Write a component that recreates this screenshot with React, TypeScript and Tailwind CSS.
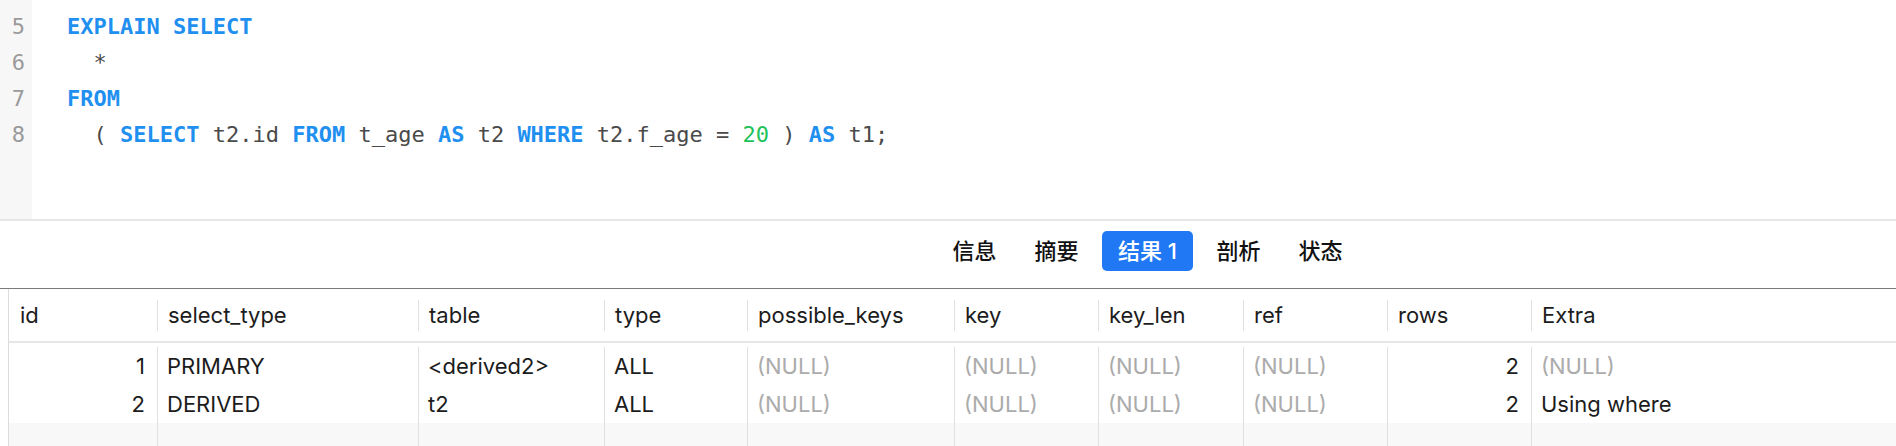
import React from "react";

const KW = "font-bold text-[#1f8ff0]";
const ID = "text-[#4a4a4a]";

function Code() {
  const lines: React.ReactNode[] = [
    <>
      <span className={KW}>EXPLAIN SELECT</span>
    </>,
    <>
      <span className={ID}>{"  *"}</span>
    </>,
    <>
      <span className={KW}>FROM</span>
    </>,
    <>
      <span className={ID}>{"  ( "}</span>
      <span className={KW}>SELECT</span>
      <span className={ID}> t2.id </span>
      <span className={KW}>FROM</span>
      <span className={ID}> t_age </span>
      <span className={KW}>AS</span>
      <span className={ID}> t2 </span>
      <span className={KW}>WHERE</span>
      <span className={ID}> t2.f_age = </span>
      <span className="text-[#1ec25a]">20</span>
      <span className={ID}> ) </span>
      <span className={KW}>AS</span>
      <span className={ID}> t1;</span>
    </>,
  ];
  return (
    <div className="flex h-[219px] bg-white">
      <div className="w-[32px] bg-[#f7f7f7] pt-[9px] pr-[7px] text-right font-['DejaVu_Sans_Mono',monospace] text-[22px] leading-[36px] text-[#9a9a9a]">
        {[5, 6, 7, 8].map((n) => (
          <div key={n}>{n}</div>
        ))}
      </div>
      <div className="pl-[35px] pt-[9px] font-['DejaVu_Sans_Mono',monospace] text-[22px] leading-[36px] whitespace-pre">
        {lines.map((l, i) => (
          <div key={i}>{l}</div>
        ))}
      </div>
    </div>
  );
}

function Tabs() {
  const tabs = [
    { t: "信息", w: "w-[73px]" },
    { t: "摘要", w: "w-[73px]" },
    { t: "结果 1", w: "w-[91px]", active: true },
    { t: "剖析", w: "w-[73px]" },
    { t: "状态", w: "w-[73px]" },
  ];
  return (
    <div className="flex h-[68px] items-start gap-[9px] border-b border-[#7b7b7b] bg-white pl-[938px] pt-[10px] font-['Inter','Noto_Sans_CJK_SC',sans-serif] text-[22px] font-medium">
      {tabs.map((t) => (
        <div
          key={t.t}
          className={
            t.w +
            " flex h-[40px] items-center justify-center rounded-[5px] " +
            (t.active ? "bg-[#2178f5] text-white" : "text-[#111]")
          }
        >
          {t.t}
        </div>
      ))}
    </div>
  );
}

const cols = [
  { n: "id", w: "w-[148px]", r: true },
  { n: "select_type", w: "w-[261px]" },
  { n: "table", w: "w-[186px]" },
  { n: "type", w: "w-[143px]" },
  { n: "possible_keys", w: "w-[207px]" },
  { n: "key", w: "w-[144px]" },
  { n: "key_len", w: "w-[145px]" },
  { n: "ref", w: "w-[144px]" },
  { n: "rows", w: "w-[144px]", r: true },
  { n: "Extra", w: "flex-1" },
];

const rows: (string | null)[][] = [
  ["1", "PRIMARY", "<derived2>", "ALL", null, null, null, null, "2", null],
  ["2", "DERIVED", "t2", "ALL", null, null, null, null, "2", "Using where"],
  ["", "", "", "", "", "", "", "", "", ""],
];

function Table() {
  return (
    <div className="ml-[8px] border-l border-[#dcdcdc] font-['Inter',sans-serif] text-[22px]">
      <div className="flex h-[54px] border-b-2 border-[#e6e6e6]">
        {cols.map((c, i) => (
          <div key={c.n} className={c.w + " flex shrink-0 items-center"}>
            {i > 0 ? <div className="h-[31px] w-px bg-[#e0e0e0]" /> : <div className="w-px" />}
            <span className="pl-[10px] text-[#1c1c1c]">{c.n}</span>
          </div>
        ))}
      </div>
      <div className="pt-[4px]">
        {rows.map((r, ri) => (
          <div key={ri} className={"flex h-[38px] " + (ri === 2 ? "bg-[#f8f8f8]" : "")}>
            {cols.map((c, i) => {
              const v = r[i];
              return (
                <div
                  key={c.n}
                  className={
                    c.w +
                    " flex shrink-0 items-center " +
                    (i > 0 ? "border-l border-[#e0e0e0] " : "") +
                    (c.r ? "justify-end pr-[12px]" : "pl-[9px]")
                  }
                >
                  {v === null ? (
                    <span className="text-[#ababab]">(NULL)</span>
                  ) : (
                    <span className="text-[#1c1c1c]">{v}</span>
                  )}
                </div>
              );
            })}
          </div>
        ))}
      </div>
    </div>
  );
}

export default function App() {
  return (
    <div className="h-[446px] w-[1896px] overflow-hidden bg-white">
      <Code />
      <div className="h-[2px] bg-[#e6e6e6]" />
      <Tabs />
      <Table />
    </div>
  );
}
